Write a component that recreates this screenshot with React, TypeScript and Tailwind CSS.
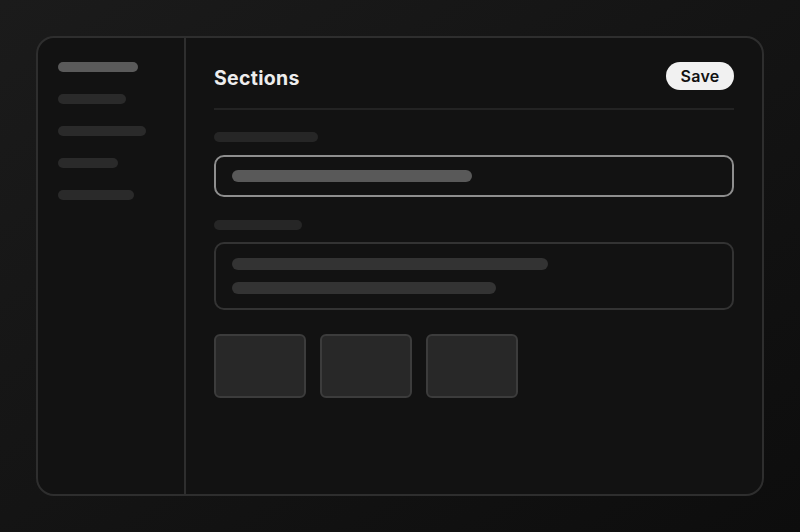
import React from "react";

export default function App() {
  return (
    <div
      className="w-[800px] h-[532px] p-[36px] bg-gradient-to-br from-[#1b1b1b] to-[#0d0d0d]"
      style={{ fontFamily: "Inter, 'Noto Sans', sans-serif" }}
    >
      <div className="w-full h-full flex rounded-[18px] border-2 border-[#2e2e2e] bg-[#121212] overflow-hidden">
        <aside className="w-[148px] shrink-0 border-r-2 border-[#2e2e2e] pl-[20px] pt-[24px] flex flex-col gap-[22px]">
          <div className="h-[10px] w-[80px] rounded-full bg-[#5a5a5a]" />
          <div className="h-[10px] w-[68px] rounded-full bg-[#2a2a2a]" />
          <div className="h-[10px] w-[88px] rounded-full bg-[#2a2a2a]" />
          <div className="h-[10px] w-[60px] rounded-full bg-[#2a2a2a]" />
          <div className="h-[10px] w-[76px] rounded-full bg-[#2a2a2a]" />
        </aside>
        <main className="flex-1 pl-[28px] pr-[28px] pt-[24px] flex flex-col">
          <div className="h-[28px] flex items-center justify-between">
            <h1 className="pt-[4px] text-[19.5px] font-bold text-[#ededed] tracking-[0.3px] leading-[24px]">Sections</h1>
            <button className="h-[28px] w-[68px] rounded-full bg-[#f1f1f1] text-[#111] text-[16px] font-semibold tracking-[0.3px] flex items-center justify-center">
              Save
            </button>
          </div>
          <div className="mt-[18px] h-[2px] bg-[#232323]" />
          <div className="mt-[22px] h-[10px] w-[104px] rounded-full bg-[#262626]" />
          <div className="mt-[13px] h-[42px] rounded-[10px] border-2 border-[#8e8e8e] flex items-center pl-[16px]">
            <div className="h-[12px] w-[240px] rounded-full bg-[#595959]" />
          </div>
          <div className="mt-[23px] h-[10px] w-[88px] rounded-full bg-[#262626]" />
          <div className="mt-[12px] h-[68px] rounded-[10px] border-2 border-[#333333] pl-[16px] pt-[14px] flex flex-col gap-[12px]">
            <div className="h-[12px] w-[316px] rounded-full bg-[#333333]" />
            <div className="h-[12px] w-[264px] rounded-full bg-[#333333]" />
          </div>
          <div className="mt-[24px] flex gap-[14px]">
            <div className="h-[64px] w-[92px] rounded-[6px] border-2 border-[#3c3c3c] bg-[#282828]" />
            <div className="h-[64px] w-[92px] rounded-[6px] border-2 border-[#3c3c3c] bg-[#282828]" />
            <div className="h-[64px] w-[92px] rounded-[6px] border-2 border-[#3c3c3c] bg-[#282828]" />
          </div>
        </main>
      </div>
    </div>
  );
}
